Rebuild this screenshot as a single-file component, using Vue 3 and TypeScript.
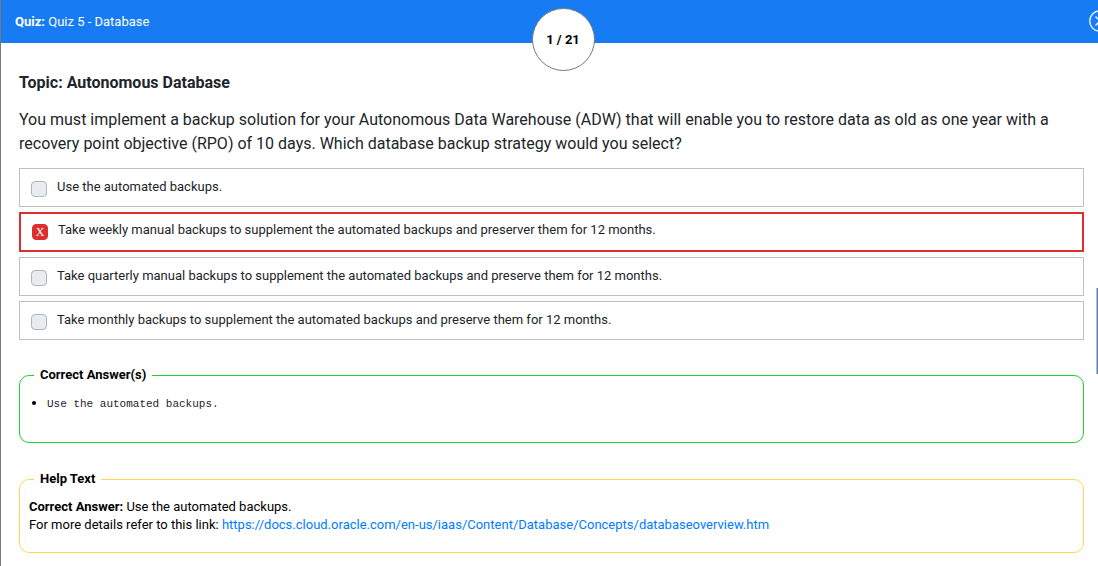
<script setup lang="ts">
import { ref } from 'vue'

interface Option {
  id: string
  text: string
  wrong: boolean
}

const options: Option[] = [
  { id: 'opt-1', text: 'Use the automated backups.', wrong: false },
  { id: 'opt-2', text: 'Take weekly manual backups to supplement the automated backups and preserver them for 12 months.', wrong: true },
  { id: 'opt-3', text: 'Take quarterly manual backups to supplement the automated backups and preserve them for 12 months.', wrong: false },
  { id: 'opt-4', text: 'Take monthly backups to supplement the automated backups and preserve them for 12 months.', wrong: false },
]

const selected = ref<string[]>(['opt-2'])
const link = 'https://docs.cloud.oracle.com/en-us/iaas/Content/Database/Concepts/databaseoverview.htm'
</script>

<template>
  <div class="quiz">
    <header class="bar">
      <div class="title"><b>Quiz:</b> Quiz 5 - Database</div>
      <div class="counter">1 / 21</div>
      <button class="close" type="button" aria-label="Close">
        <svg viewBox="0 0 22 22" width="22" height="22" fill="none" stroke="#e6f1ff">
          <circle cx="11" cy="11" r="10.2" stroke-width="1.3" />
          <path d="M6.5 6.5l9 9M15.5 6.5l-9 9" stroke-width="1.5" />
        </svg>
      </button>
    </header>

    <main class="body">
      <h1 class="topic">Topic: Autonomous Database</h1>
      <p class="question">
        You must implement a backup solution for your Autonomous Data Warehouse (ADW) that will enable you to restore data as old as one year with a recovery point objective (RPO) of 10 days. Which database backup strategy would you select?
      </p>

      <div class="options">
        <label v-for="o in options" :key="o.id" class="option" :class="{ wrong: o.wrong }" :for="o.id">
          <input :id="o.id" v-model="selected" class="box" type="checkbox" :value="o.id" />
          <span class="option-text">{{ o.text }}</span>
        </label>
      </div>

      <fieldset class="panel correct">
        <legend>Correct Answer(s)</legend>
        <ul class="answers">
          <li><code>Use the automated backups.</code></li>
        </ul>
      </fieldset>

      <fieldset class="panel help">
        <legend>Help Text</legend>
        <p><b>Correct Answer:</b> Use the automated backups.</p>
        <p>For more details refer to this link: <a :href="link">{{ link }}</a></p>
      </fieldset>
    </main>

    <div class="scroll-thumb"></div>
  </div>
</template>

<style>
body {
  background: #fff;
}
</style>

<style scoped>
.quiz {
  position: relative;
  box-sizing: border-box;
  min-height: 100vh;
  border-left: 1px solid #77787b;
  overflow: hidden;
  font-family: Roboto, "Liberation Sans", sans-serif;
  font-size: 13px;
  color: #212529;
}

/* The bar runs past the right edge of the content area. */
.bar {
  box-sizing: border-box;
  display: grid;
  grid-template-columns: 1fr auto 1fr;
  align-items: start;
  width: calc(100% + 28px);
  height: 43px;
  padding: 0 15px 0 14px;
  background: #177bf3;
}

.title {
  line-height: 43px;
  color: #fff;
}

.counter {
  box-sizing: border-box;
  width: 63px;
  height: 63px;
  margin-top: 8px;
  border: 1px solid #77787b;
  border-radius: 50%;
  background: #fff;
  color: #000;
  font-weight: 700;
  line-height: 61px;
  text-align: center;
}

.close {
  justify-self: end;
  display: flex;
  margin-top: 10px;
  padding: 0;
  border: 0;
  background: none;
}

.body {
  padding: 28px 14px 13px 18px;
}

.topic {
  margin: 0 0 13px;
  font-size: 16px;
  line-height: 24px;
  font-weight: 700;
}

.question {
  margin: 0 0 12px;
  font-size: 16px;
  line-height: 24px;
}

.options {
  display: flex;
  flex-direction: column;
  gap: 5px;
}

.option {
  box-sizing: border-box;
  display: flex;
  align-items: flex-start;
  gap: 10px;
  min-height: 39px;
  padding: 8px 11px;
  border: 1px solid #c0c0c0;
}

.option.wrong {
  min-height: 40px;
  padding-top: 6px;
  border: 2px solid #dc3030;
}

.option-text {
  line-height: 20px;
}

.box {
  appearance: none;
  box-sizing: border-box;
  flex: none;
  display: grid;
  place-items: center;
  width: 16px;
  height: 16px;
  margin: 4px 0 0;
  border: 1px solid #adb5bd;
  border-radius: 4px;
  background: #e9ecef;
}

.box:checked {
  border-color: #dc3030;
  background: #dc3030;
}

.box:checked::before {
  content: "X";
  color: #fff;
  font-family: "Liberation Serif", serif;
  font-size: 12px;
  line-height: 14px;
}

.panel {
  box-sizing: border-box;
  min-width: 0;
  margin: 0;
  padding: 0 9px;
  border: 1px solid #22cc33;
  border-radius: 10px;
  color: #000;
}

.panel legend {
  margin-left: 5px;
  padding: 0 6px;
  line-height: 18px;
  font-weight: 700;
}

.correct {
  margin-top: 26px;
  padding-bottom: 28px;
}

.help {
  margin-top: 27px;
  padding-bottom: 18px;
  border-color: #ffd557;
}

.help p {
  margin: 0;
  line-height: 18px;
}

.help legend {
  margin-bottom: 10px;
}

.help a {
  color: #007bff;
  text-decoration: none;
}

.answers {
  margin: 9px 0 0;
  padding-left: 18px;
  line-height: 19px;
}

.answers code {
  font-family: "Liberation Mono", monospace;
  font-size: 11px;
  color: #212529;
}

.scroll-thumb {
  position: absolute;
  top: 288px;
  right: 0;
  width: 2px;
  height: 86px;
  box-sizing: border-box;
  border-left: 1px solid #a9c0dc;
  background: #5f7ea8;
}
</style>
